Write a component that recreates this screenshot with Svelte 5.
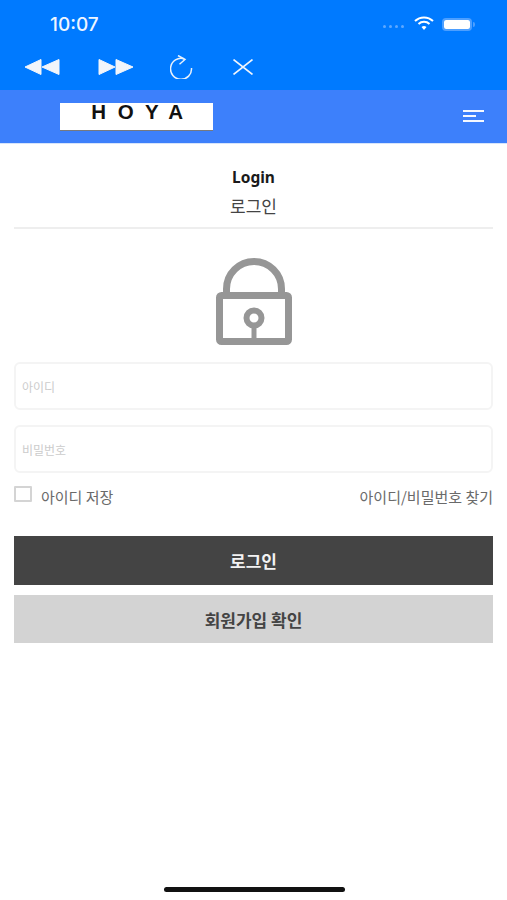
<script lang="ts">
  let userId = $state("");
  let password = $state("");
  let saveId = $state(false);
</script>

<div class="screen">
  <div class="browser-bar">
    <div class="status">
      <span class="time">10:07</span>
      <div class="status-icons">
        <div class="signal">
          <i></i><i></i><i></i><i></i>
        </div>
        <svg class="wifi" width="20" height="14" viewBox="0 0 20 14">
          <path d="M1 5 A13 13 0 0 1 19 5" fill="none" stroke="#fff" stroke-width="2" />
          <path d="M4.5 8 A8 8 0 0 1 15.500 8" fill="none" stroke="#fff" stroke-width="2" />
          <path d="M7.500 11 L10 14 L12.500 11 A4 4 0 0 0 7.500 11 Z" fill="#fff" />
        </svg>
        <div class="battery"><span></span></div>
        <i class="battery-tip"></i>
      </div>
    </div>
    <div class="tools">
      <svg class="tool" width="36" height="18" viewBox="0 0 36 18">
        <path d="M1 9 L17 1.500 V16.500 Z M18 9 L35 1.500 V16.500 Z" fill="#f1f5fb" stroke="#f1f5fb" stroke-linejoin="round" />
      </svg>
      <svg class="tool" width="36" height="18" viewBox="0 0 36 18">
        <path d="M1 1.500 L17 9 L1 16.500 Z M18 1.500 L35 9 L18 16.500 Z" fill="#f1f5fb" stroke="#f1f5fb" stroke-linejoin="round" />
      </svg>
      <svg class="tool" width="24" height="24" viewBox="0 0 24 24">
        <path d="M21.500 13 A10.500 10.500 0 1 1 14 3.800" fill="none" stroke="#e8f1fc" stroke-width="1.500" />
        <path d="M8 0.500 L15 4.500 L9.500 9.300" fill="none" stroke="#e8f1fc" stroke-width="1.500" />
      </svg>
      <svg class="tool" width="22" height="16" viewBox="0 0 22 16">
        <path d="M1.500 0.500 L20.500 15.500 M20.500 0.500 L1.500 15.500" fill="none" stroke="#f1f5fb" stroke-width="1.600" />
      </svg>
    </div>
  </div>

  <header class="site-header">
    <div class="logo"><span>HOYA</span></div>
    <button class="menu" type="button" aria-label="menu">
      <i></i><i class="short"></i><i></i>
    </button>
  </header>

  <main class="content">
    <div class="heading">
      <h1>Login</h1>
      <p>로그인</p>
    </div>

    <svg class="lock" width="76" height="87" viewBox="0 0 76 87">
      <path d="M10.500 37 V31 A27.500 27.500 0 0 1 65.500 31 V37" fill="none" stroke="#969696" stroke-width="7" />
      <rect x="3.500" y="37.500" width="69" height="46" rx="2" fill="none" stroke="#969696" stroke-width="7" />
      <circle cx="38" cy="60" r="7.500" fill="none" stroke="#969696" stroke-width="6" />
      <path d="M38 68 V84" stroke="#969696" stroke-width="5" />
    </svg>

    <form class="login-form" onsubmit={(e) => e.preventDefault()}>
      <input class="field" type="text" placeholder="아이디" bind:value={userId} />
      <input class="field" type="password" placeholder="비밀번호" bind:value={password} />

      <div class="options">
        <label class="save">
          <input type="checkbox" bind:checked={saveId} />
          <span>아이디 저장</span>
        </label>
        <span class="find">아이디/비밀번호 찾기</span>
      </div>

      <button class="btn primary" type="submit">로그인</button>
      <button class="btn secondary" type="button">회원가입 확인</button>
    </form>
  </main>

  <div class="home-indicator"></div>
</div>

<style>
  :global(body) {
    background: #fff;
  }

  .screen {
    position: relative;
    height: 900px;
    overflow: hidden;
    background: #fff;
    font-family: "Noto Sans CJK KR", "Noto Sans", sans-serif;
  }

  .browser-bar {
    height: 90px;
    background: #007aff;
    box-sizing: border-box;
  }

  .status {
    height: 49px;
    padding: 14px 32px 0 50px;
    box-sizing: border-box;
    display: flex;
    justify-content: space-between;
    align-items: flex-start;
  }

  .time {
    color: #eef5ff;
    font-family: "Inter", sans-serif;
    font-size: 19px;
    font-weight: 500;
    line-height: 22px;
  }

  .status-icons {
    display: flex;
    align-items: center;
    gap: 7px;
    height: 22px;
    margin-top: -1px;
  }

  .signal {
    display: flex;
    gap: 3px;
    margin-top: 5px;
    margin-right: 3px;
  }

  .signal i {
    width: 3px;
    height: 3px;
    border-radius: 50%;
    background: #5ea8ff;
  }

  .wifi {
    margin-top: -2px;
  }

  .battery {
    width: 30px;
    height: 13px;
    border: 2px solid #4d9fff;
    border-radius: 4px;
    box-sizing: border-box;
    margin-left: 1px;
    display: flex;
  }

  .battery span {
    flex: 1;
    background: #fff;
    border-radius: 2px;
  }

  .battery-tip {
    width: 2px;
    height: 5px;
    margin-left: -6px;
    background: #4d9fff;
    border-radius: 0 2px 2px 0;
  }

  .tools {
    display: flex;
    align-items: center;
    padding-left: 24px;
    height: 36px;
  }

  .tool:nth-child(1) {
    margin-right: 38px;
  }

  .tool:nth-child(2) {
    margin-right: 36px;
  }

  .tool:nth-child(3) {
    margin-right: 38px;
  }

  .site-header {
    background: #3d80fb;
    border-bottom: 1px solid #d6e4fb;
    box-sizing: content-box;
    display: flex;
    justify-content: space-between;
    align-items: flex-start;
    padding: 13px 23px 0 60px;
    height: 40px;
  }

  .logo {
    width: 153px;
    height: 27px;
    background: #fff;
    border-bottom: 1px solid #77797f;
    box-sizing: content-box;
    text-align: center;
  }

  .logo span {
    display: block;
    padding-left: 13px;
    color: #111;
    font-family: "Liberation Sans", sans-serif;
    font-size: 20.500px;
    font-weight: 700;
    letter-spacing: 0.56em;
    line-height: 17px;
  }

  .menu {
    border: 0;
    background: transparent;
    padding: 0;
    margin-top: 7px;
    width: 21px;
    display: flex;
    flex-direction: column;
    gap: 3px;
  }

  .menu i {
    display: block;
    width: 21px;
    height: 2px;
    background: #f4f8ff;
  }

  .menu i.short {
    width: 13px;
  }

  .content {
    padding: 0 14px;
  }

  .heading {
    text-align: center;
    height: 85px;
    padding-top: 22px;
    box-sizing: border-box;
    border-bottom: 2px solid #eeeeee;
  }

  .heading h1 {
    margin: 0;
    color: #1a1a1a;
    font-family: "Noto Sans", sans-serif;
    font-size: 15.500px;
    font-weight: 700;
    line-height: 22px;
  }

  .heading p {
    margin: 7px 0 0;
    color: #444;
    font-size: 17px;
    line-height: 22px;
  }

  .lock {
    display: block;
    margin: 29px auto 0;
  }

  .login-form {
    margin-top: 17px;
    display: flex;
    flex-direction: column;
  }

  .field {
    height: 48px;
    margin-bottom: 15px;
    padding: 0 6px;
    box-sizing: border-box;
    width: 100%;
    border: 2px solid #f4f4f4;
    border-radius: 6px;
    outline: none;
    background: #fff;
    font-family: inherit;
    font-size: 12px;
  }

  .field::placeholder {
    color: #cccccc;
  }

  .options {
    display: flex;
    justify-content: space-between;
    align-items: center;
    height: 24px;
    margin-top: -4px;
    color: #6a6a6a;
    font-size: 15px;
  }

  .save {
    display: flex;
    align-items: center;
    gap: 9px;
  }

  .save input {
    appearance: none;
    width: 18px;
    height: 16px;
    margin: 0 0 4px;
    border: 2px solid #d4d4d4;
    border-radius: 1px;
    background: #fff;
  }

  .btn {
    width: 100%;
    height: 48px;
    border: 0;
    padding: 0;
    font-family: inherit;
    font-size: 17px;
    font-weight: 700;
  }

  .primary {
    margin-top: 28px;
    height: 49px;
    background: #444444;
    color: #f2f2f2;
  }

  .secondary {
    margin-top: 10px;
    background: #d3d3d3;
    color: #444;
  }

  .home-indicator {
    position: absolute;
    left: 164px;
    bottom: 8px;
    width: 181px;
    height: 5px;
    border-radius: 3px;
    background: #111;
  }
</style>
